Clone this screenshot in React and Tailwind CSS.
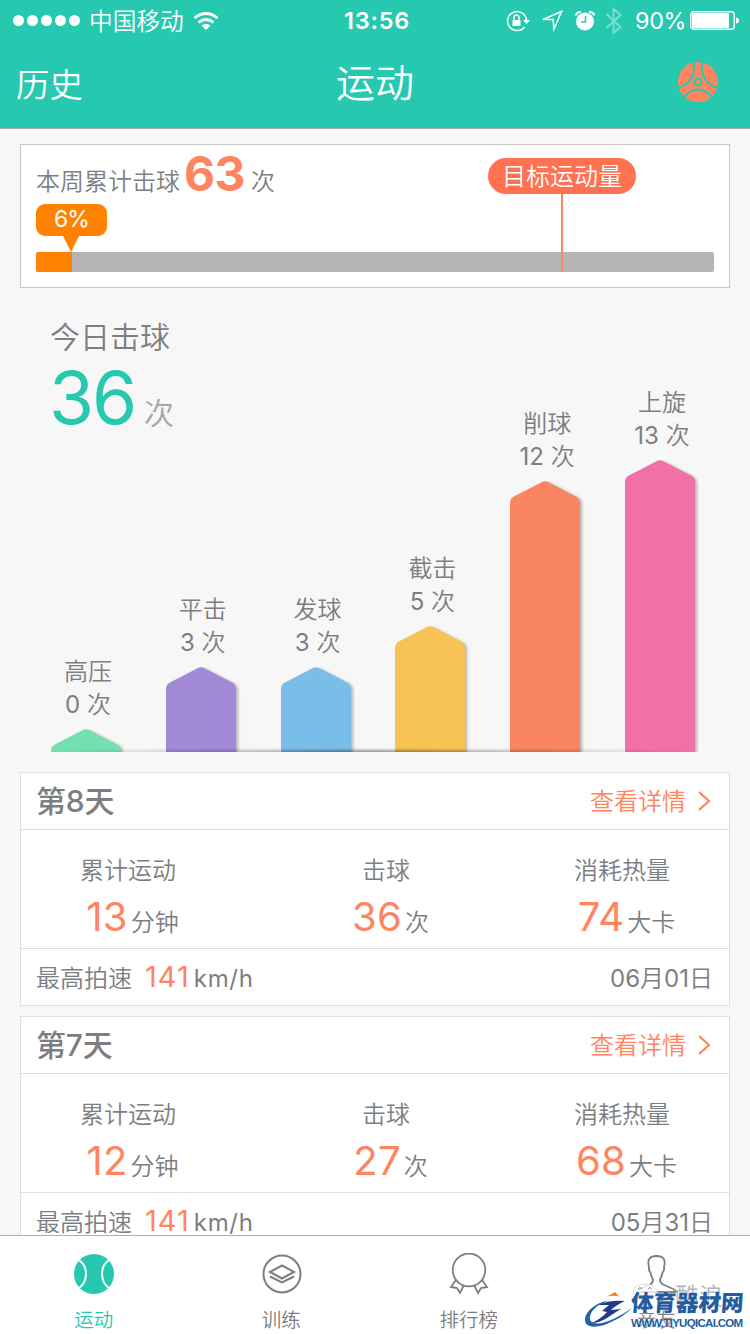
import { clsx } from 'clsx';

const BARS = [
    { name: '高压', count: 0, height: 23, color: '#74e0b0' },
    { name: '平击', count: 3, height: 85, color: '#a38ad6' },
    { name: '发球', count: 3, height: 85, color: '#7abde8' },
    { name: '截击', count: 5, height: 126, color: '#f8c355' },
    { name: '削球', count: 12, height: 271, color: '#f98661' },
    { name: '上旋', count: 13, height: 292, color: '#f171a6' },
];

const DAYS = [
    { day: '8', minutes: 13, hits: 36, kcal: 74, speed: 141, month: '06', date: '01' },
    { day: '7', minutes: 12, hits: 27, kcal: 68, speed: 141, month: '05', date: '31' },
];

function StatusBar() {
    return (
        <div className="flex h-10 items-center pt-px pl-3 text-2xl leading-10">
            <div className="flex w-[332px] shrink-0 items-center">
                <div className="flex gap-[3px] pl-px">
                    {[0, 1, 2, 3, 4].map((i) => (
                        <span key={i} className="size-[11px] rounded-full bg-white" />
                    ))}
                </div>
                <span className="ml-[9px] pt-[2px] text-[23.700px]">中国移动</span>
                <svg width="26" height="20" viewBox="0 0 26 20" fill="none" stroke="#fff" strokeWidth="2.800" className="ml-[9px]">
                    <path d="M1.500 7Q13-2 24.500 7M5.500 11.500Q13 5.500 20.500 11.500" />
                    <path d="M13 19L8.500 14.500Q13 11 17.500 14.500Z" fill="#fff" stroke="none" />
                </svg>
            </div>
            <span className="w-[162px] shrink-0 text-[23.500px] font-semibold tracking-[0.8px]">13:56</span>
            <svg width="24" height="24" viewBox="0 0 24 24" fill="none" stroke="#fff" strokeWidth="1.500" className="shrink-0">
                <path d="M18.500 18A9.500 9.500 0 1 1 20.500 11" />
                <path d="M17 11h7l-3.500 4z M6.500 11h8v6h-8z" fill="#fff" stroke="none" />
                <path d="M8 11V8.500a2.500 2.500 0 0 1 5 0V11" />
            </svg>
            <svg width="22" height="24" viewBox="0 0 22 24" fill="none" stroke="#fff" strokeWidth="1.500" className="ml-[11px] shrink-0">
                <path d="M2 10.500L20.500 2.500L13 20L12 10.500Z" />
            </svg>
            <svg width="20" height="22" viewBox="0 0 20 22" className="ml-[12px] shrink-0">
                <circle cx="10" cy="11.500" r="9" fill="#fff" />
                <path d="M1 5.500Q1 2 6 2M19 5.500Q19 2 14 2" stroke="#fff" strokeWidth="2" fill="none" />
                <path d="M10.500 6V12H6" stroke="#26c9af" strokeWidth="1.500" fill="none" />
            </svg>
            <svg width="18" height="28" viewBox="0 0 18 28" fill="none" stroke="#80dece" strokeWidth="1.800" className="ml-[10px] shrink-0">
                <path d="M1.500 7L15.500 20L8.500 26V2L15.500 8L1.500 21" />
            </svg>
            <span className="ml-[12px] w-[50px] shrink-0 text-[23.300px] font-normal tracking-[-0.3px]">90%</span>
            <svg width="50" height="20" viewBox="0 0 50 20" fill="none" className="ml-[5px] shrink-0">
                <rect x="0.750" y="0.750" width="43.500" height="17.500" rx="3" stroke="#fff" strokeWidth="1.300" />
                <rect x="2" y="2" width="37" height="15" rx="1" fill="#fff" />
                <path d="M46 6.500Q49 7 49 9.500T46 12.500Z" fill="#fff" />
            </svg>
        </div>
    );
}

function BallIcon() {
    return (
        <svg width="40" height="40" viewBox="0 0 40 40" className="justify-self-end">
            <circle cx="20" cy="20" r="20" fill="#ff8560" />
            <g fill="none" stroke="#26c9af" strokeWidth="2">
                <path d="M15.500 0Q17 10 13.500 16Q8.500 24.500 0 25.500M24.500 0Q23 10 26.500 16Q31.500 24.500 40 25.500M5.500 36Q11 27.500 20 27.500T34.500 36" />
                <circle cx="20" cy="20" r="3.500" />
            </g>
        </svg>
    );
}

function Header() {
    return (
        <header className="h-[129px] shrink-0 border-b border-[#a9aaa9] bg-[#26c9af] text-white">
            <StatusBar />
            <div className="grid h-[84px] grid-cols-3 items-center pr-8 pl-4">
                <span className="pt-[7px] text-[33.500px]">历史</span>
                <span className="relative top-px ml-[16px] text-center text-[39px] leading-[84px]">运动</span>
                <BallIcon />
            </div>
        </header>
    );
}

function WeekProgress() {
    return (
        <section className="relative h-36 border border-[#c8c8c8] bg-white px-[15px]">
            <div className="flex h-[58px] items-baseline text-2xl">
                <span className="relative -top-px">本周累计击球</span>
                <span className="ml-1 text-5xl leading-[58px] font-bold tracking-[-0.6px] text-[#ff8560]">63</span>
                <span className="relative -top-px ml-[6px]">次</span>
            </div>
            <div className="h-12">
                <div className="relative mt-px h-8 w-[71px] rounded-[9px] bg-[#ff8200] text-center text-[23px] leading-[30px] font-normal tracking-[-0.8px] text-white">
                    6%
                    <svg width="16" height="16" viewBox="0 0 16 16" className="absolute top-8 left-[27px]">
                        <path d="M0 0H16L8 16Z" fill="#ff8200" />
                    </svg>
                </div>
            </div>
            <div className="flex h-5 overflow-hidden rounded-[2px] bg-[#b5b5b5]">
                <div className="w-9 bg-[#ff8200]" />
            </div>
            {/* target marker */}
            <div className="absolute top-[13px] left-[467px] flex w-[148px] flex-col items-center">
                <span className="h-9 w-full rounded-full bg-[#ff7150] text-center text-2xl leading-[38px] text-white">目标运动量</span>
                <span className="h-[78px] w-[2px] bg-[#ff8560]" />
            </div>
        </section>
    );
}

function Bar({ bar }) {
    const h = bar.height;
    return (
        <div className="flex w-[70px] flex-col items-center">
            <div className="mb-2 ml-1 text-center text-2xl leading-[33px] whitespace-nowrap">
                <div>{bar.name}</div>
                <div><span className="font-normal">{bar.count}</span> 次</div>
            </div>
            <svg width="78" height={h} viewBox={`0 0 78 ${h}`} className="ml-2 shrink-0">
                <path
                    d={`M0 ${h}V21Q0 18 3 16L32 1Q35-.5 38 1L67 16Q70 18 70 21V${h}Z`}
                    fill={bar.color}
                    className="drop-shadow-[2px_1px_1.500px_rgba(0,0,0,0.28)]"
                />
            </svg>
        </div>
    );
}

function TodayChart() {
    return (
        <section className="relative h-[464px]">
            <div className="absolute top-[29px] left-[30px]">
                <div className="text-[30px] leading-10">今日击球</div>
                <div className="-mt-px flex items-baseline leading-[84px]">
                    <span className="-ml-px text-[73px] font-normal tracking-[-2.200px] text-[#26c9af]">36</span>
                    <span className="ml-[9px] text-[30px] text-[#a5a5a5]">次</span>
                </div>
            </div>
            <div className="flex h-full items-end justify-between pr-[35px] pl-[31px]">
                {BARS.map((bar) => <Bar key={bar.name} bar={bar} />)}
            </div>
            <div className="absolute bottom-0 left-[31px] h-1 w-[644px] bg-linear-to-r from-transparent via-black/40 to-transparent mask-t-from-0%" />
        </section>
    );
}

function Stat({ label, value, unit }) {
    return (
        <div className="flex w-[150px] flex-col items-center">
            <span className="text-2xl leading-8">{label}</span>
            <div className="ml-[9px] flex items-baseline leading-[60px]">
                <span className="text-[40px] font-normal tracking-[0.200px] text-[#ff8560]">{value}</span>
                <span className="ml-[3px] text-2xl">{unit}</span>
            </div>
        </div>
    );
}

function DayCard({ item }) {
    return (
        <section className="h-[234px] shrink-0 border border-[#dedede] bg-white">
            <div className="flex h-[57px] items-center justify-between border-b border-[#dedede] pr-[17px] pl-[15px]">
                <h2 className="pt-px text-[30px] font-medium tracking-[-0.200px]">第{item.day}天</h2>
                <a className="flex items-center gap-[10px] text-2xl text-[#ff8560]">
                    <span className="pt-[2px]">查看详情</span>
                    <svg width="16" height="20" viewBox="0 0 16 20" fill="none" stroke="#ff8560" strokeWidth="2.200">
                        <path d="M3 1L13 10L3 19" />
                    </svg>
                </a>
            </div>
            <div className="flex h-[119px] justify-between border-b border-[#dedede] px-[32px] pt-[25px]">
                <Stat label="累计运动" value={item.minutes} unit="分钟" />
                <div className="ml-[22px]">
                    <Stat label="击球" value={item.hits} unit="次" />
                </div>
                <Stat label="消耗热量" value={item.kcal} unit="大卡" />
            </div>
            <div className="flex h-14 items-baseline justify-between pr-4 pl-[15px] text-2xl leading-14">
                <div className="flex items-baseline">
                    <span>最高拍速</span>
                    <span className="ml-[13px] text-[29px] font-normal tracking-[1px] text-[#ff8560]">{item.speed}</span>
                    <span className="ml-1 font-normal tracking-[0.700px]">km/h</span>
                </div>
                <div>
                    <span className="font-normal">{item.month}</span>月<span className="font-normal">{item.date}</span>日
                </div>
            </div>
        </section>
    );
}

function TabItem({ label, active, children }) {
    return (
        <div className={clsx('flex flex-col items-center', active ? 'text-[#26c9af]' : 'text-[#7d7e81]')}>
            <svg width="42" height="42" viewBox="0 0 42 42" fill="none" stroke="currentColor" strokeWidth="2" className="mt-[17px]">
                {children}
            </svg>
            <span className="mt-[9px] text-[19.500px] leading-[32px]">{label}</span>
        </div>
    );
}

function TabBar() {
    return (
        <nav className="relative grid h-[99px] shrink-0 grid-cols-4 border-t border-[#acacac] bg-white">
            <TabItem label="运动" active>
                <circle cx="21" cy="21" r="20" fill="currentColor" stroke="none" />
                <path d="M6 7Q13 12 13 21T6 35M36 7Q29 12 29 21T36 35" stroke="#fff" />
            </TabItem>
            <TabItem label="训练">
                <circle cx="22" cy="21" r="18.500" />
                <path d="M10 19L22 12.500L34 19L22 25.500ZM10 23.500L22 29.500L34 23.500" />
            </TabItem>
            <TabItem label="排行榜">
                <circle cx="21" cy="17" r="16.300" strokeWidth="1.800" />
                <path d="M8 27L3 34L9 35L12 40L16 32M34 27L39 34L33 35L30 40L26 32" strokeWidth="1.800" />
            </TabItem>
            <TabItem label="亲友">
                <path d="M2 39Q3 36.500 8 34.500L15 31.500Q18 30 18 26.500Q16 23 15.500 19.500Q13.500 18 14 14Q11 3 21.500 3T29 14Q29.500 18 27.500 19.500Q27 23 25 26.500Q25 30 28 31.500L36 35Q41 37 41 39Z" strokeWidth="1.800" />
            </TabItem>
            <Watermark />
        </nav>
    );
}

function Watermark() {
    return (
        <div className="absolute right-0 bottom-0 h-[62px] w-[170px]">
            <div className="absolute top-[7px] left-[95px] text-2xl leading-9 text-[#b5b5b5]">酷浪</div>
            <svg width="170" height="62" viewBox="0 0 170 62" className="absolute inset-0">
                <ellipse cx="65" cy="20" rx="12" ry="8" fill="#fff" fillOpacity="0.800" stroke="#ddd" />
                <path d="M58 17l2-1.500l2 1.500M68 17l2-1.500l2 1.500" fill="none" stroke="#888" />
                <path d="M28 28.500C15 31 5 40 5 48C5 57 20 56 31 50Q43 45 52 36Q35 48 22 51C12 53 9 49 10 44C12 37 19 32 28 28.500Z" fill="#1e62ab" />
                <path d="M18 33Q29 28 45 29Q36 33 31 38L41 37Q34 41 27 46Q19 51 12 51Q22 46 27 40L22 39L29 33Z" fill="#203a8c" />
                <path d="M27 24.500Q32 22 35 20L39 24.500Q33 23 27 24.500Z" fill="#f08213" />
            </svg>
            <div className="absolute top-[16px] left-[51px] skew-x-[-4deg] text-[22.500px] leading-[30px] font-black whitespace-nowrap text-[#245c9f] text-shadow-[0_0_2px_#fff]">体育器材网</div>
            <div className="absolute top-[43px] left-[51px] font-['Liberation_Sans',sans-serif] text-[11.500px] leading-4 font-bold tracking-[-0.700px] text-[#245c9f] text-shadow-[0_0_2px_#fff]">WWW.TIYUQICAI.COM</div>
        </div>
    );
}

export default function App() {
    return (
        <div className="flex h-[1334px] w-[750px] flex-col overflow-hidden bg-[#f7f7f7] font-[Inter,'Noto_Sans_CJK_SC',sans-serif] font-[350] text-[#7d7e81]">
            <Header />
            <main className="flex min-h-0 flex-1 flex-col overflow-hidden px-5 pt-[15px]">
                <div className="shrink-0"><WeekProgress /></div>
                <div className="mb-5 shrink-0"><TodayChart /></div>
                <div className="flex flex-col gap-[10px]">
                    {DAYS.map((item) => <DayCard key={item.day} item={item} />)}
                </div>
            </main>
            <TabBar />
        </div>
    );
}
